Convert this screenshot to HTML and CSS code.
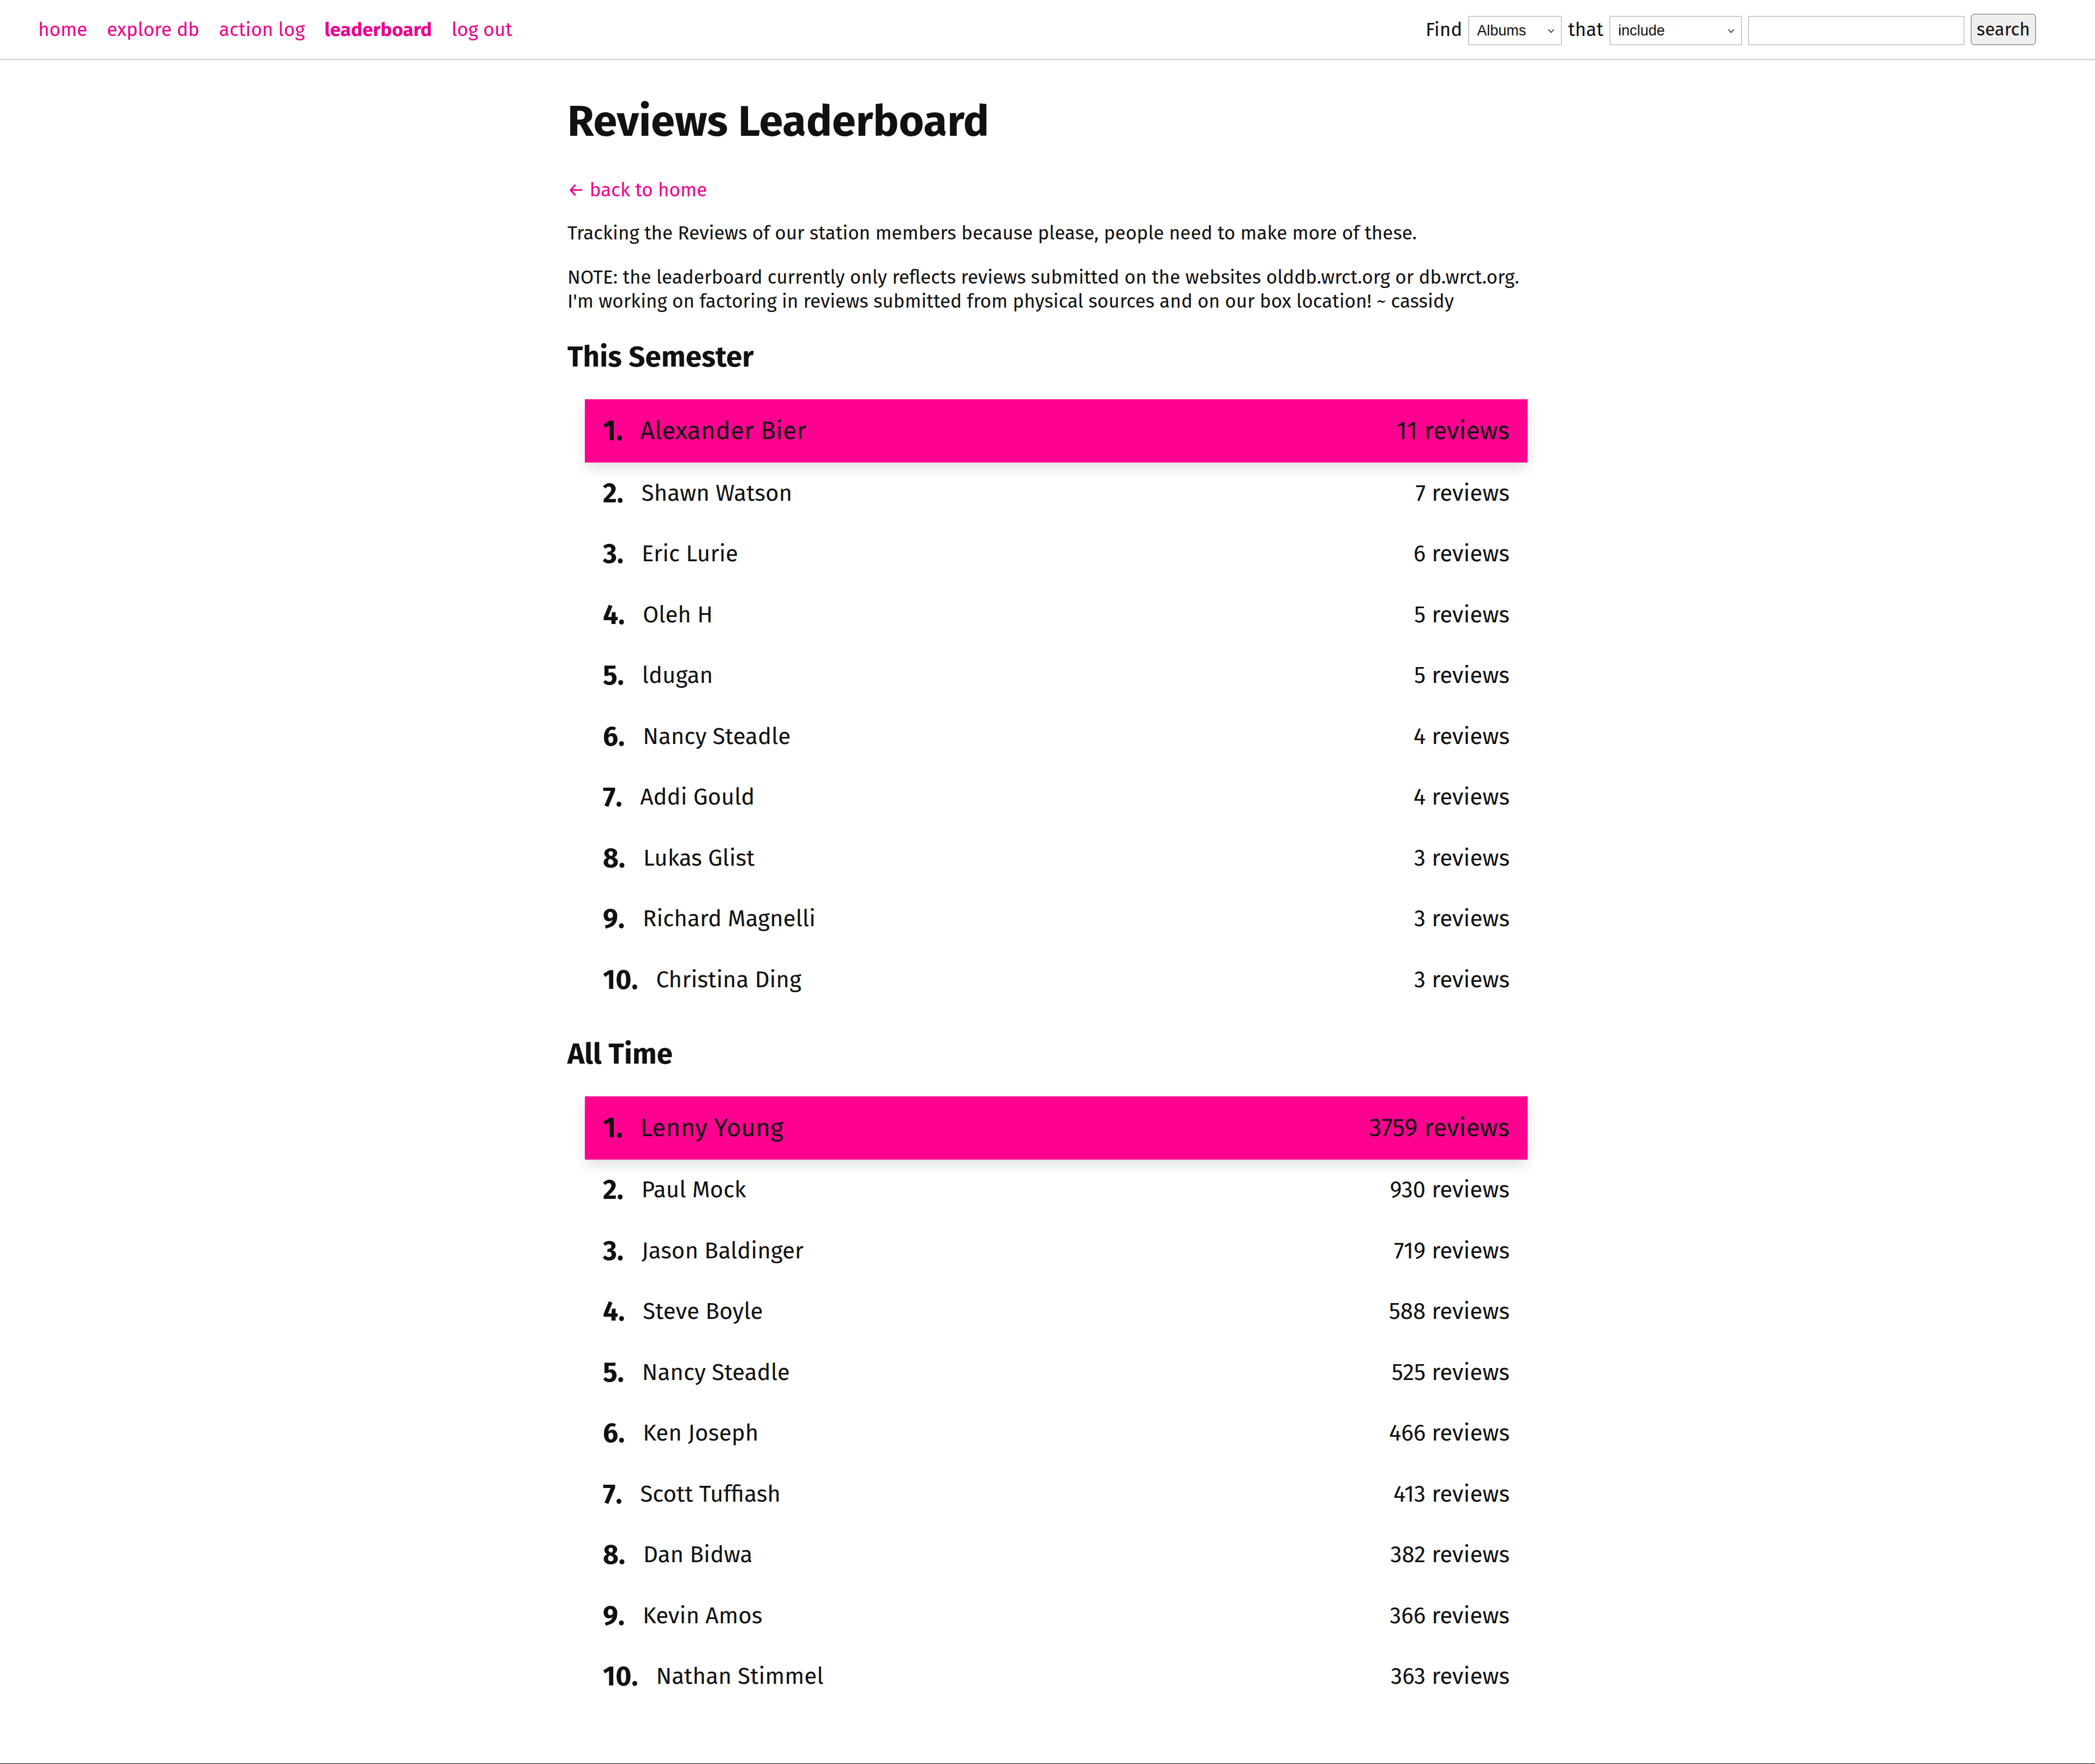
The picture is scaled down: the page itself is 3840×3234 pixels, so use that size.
FILE: index.html
```html
<!DOCTYPE html>
<html lang="en">
<head>
<meta charset="utf-8">
<title>Reviews Leaderboard</title>
<link rel="stylesheet" href="styles.css">
</head>
<body>
<nav class="topbar">
  <div class="nav-links">
    <a href="#">home</a>
    <a href="#">explore db</a>
    <a href="#">action log</a>
    <a href="#" class="current">leaderboard</a>
    <a href="#">log out</a>
  </div>
  <form class="search">
    <span class="label">Find</span>
    <span class="sel-wrap">
      <select class="sel sel-type"><option>Albums</option></select>
      <svg class="chev" width="12" height="8" viewBox="0 0 12 8"><path d="M1 1 L6 6.5 L11 1" fill="none" stroke="#333" stroke-width="1.8"/></svg>
    </span>
    <span class="label">that</span>
    <span class="sel-wrap">
      <select class="sel sel-mode"><option>include</option></select>
      <svg class="chev" width="12" height="8" viewBox="0 0 12 8"><path d="M1 1 L6 6.5 L11 1" fill="none" stroke="#333" stroke-width="1.8"/></svg>
    </span>
    <input class="query" type="text">
    <button class="btn" type="button">search</button>
  </form>
</nav>

<main class="page">
  <h1 class="title">Reviews Leaderboard</h1>
  <p class="back"><a href="#">← back to home</a></p>
  <p class="intro">Tracking the Reviews of our station members because please, people need to make more of these.</p>
  <p class="note">NOTE: the leaderboard currently only reflects reviews submitted on the websites olddb.wrct.org or db.wrct.org. I'm working on factoring in reviews submitted from physical sources and on our box location! ~ cassidy</p>

  <h2 class="section">This Semester</h2>
  <ol class="board">
    <li class="row top"><span class="rank">1.</span><span class="name">Alexander Bier</span><span class="count">11 reviews</span></li>
    <li class="row"><span class="rank">2.</span><span class="name">Shawn Watson</span><span class="count">7 reviews</span></li>
    <li class="row"><span class="rank">3.</span><span class="name">Eric Lurie</span><span class="count">6 reviews</span></li>
    <li class="row"><span class="rank">4.</span><span class="name">Oleh H</span><span class="count">5 reviews</span></li>
    <li class="row"><span class="rank">5.</span><span class="name">ldugan</span><span class="count">5 reviews</span></li>
    <li class="row"><span class="rank">6.</span><span class="name">Nancy Steadle</span><span class="count">4 reviews</span></li>
    <li class="row"><span class="rank">7.</span><span class="name">Addi Gould</span><span class="count">4 reviews</span></li>
    <li class="row"><span class="rank">8.</span><span class="name">Lukas Glist</span><span class="count">3 reviews</span></li>
    <li class="row"><span class="rank">9.</span><span class="name">Richard Magnelli</span><span class="count">3 reviews</span></li>
    <li class="row"><span class="rank">10.</span><span class="name">Christina Ding</span><span class="count">3 reviews</span></li>
  </ol>

  <h2 class="section">All Time</h2>
  <ol class="board">
    <li class="row top"><span class="rank">1.</span><span class="name">Lenny Young</span><span class="count">3759 reviews</span></li>
    <li class="row"><span class="rank">2.</span><span class="name">Paul Mock</span><span class="count">930 reviews</span></li>
    <li class="row"><span class="rank">3.</span><span class="name">Jason Baldinger</span><span class="count">719 reviews</span></li>
    <li class="row"><span class="rank">4.</span><span class="name">Steve Boyle</span><span class="count">588 reviews</span></li>
    <li class="row"><span class="rank">5.</span><span class="name">Nancy Steadle</span><span class="count">525 reviews</span></li>
    <li class="row"><span class="rank">6.</span><span class="name">Ken Joseph</span><span class="count">466 reviews</span></li>
    <li class="row"><span class="rank">7.</span><span class="name">Scott Tuffiash</span><span class="count">413 reviews</span></li>
    <li class="row"><span class="rank">8.</span><span class="name">Dan Bidwa</span><span class="count">382 reviews</span></li>
    <li class="row"><span class="rank">9.</span><span class="name">Kevin Amos</span><span class="count">366 reviews</span></li>
    <li class="row"><span class="rank">10.</span><span class="name">Nathan Stimmel</span><span class="count">363 reviews</span></li>
  </ol>
</main>
<footer class="footer"></footer>
</body>
</html>
```

FILE: styles.css
```css
* { box-sizing: border-box; }

html, body {
  margin: 0;
  padding: 0;
  background: #fff;
}

body {
  font-family: "Fira Sans", "Open Sans", "Noto Sans", sans-serif;
  color: #111;
  font-size: 35px;
  line-height: 44px;
}

a {
  color: #ec008c;
  text-decoration: none;
}

/* top navigation */
.topbar {
  height: 110px;
  border-bottom: 2px solid #cfcfcf;
  display: flex;
  align-items: center;
  justify-content: space-between;
  padding: 0 108px 0 70px;
}

.nav-links {
  display: flex;
  gap: 36px;
  font-size: 35px;
}

.nav-links .current {
  font-weight: 700;
}

.search {
  display: flex;
  align-items: center;
  gap: 11px;
  margin: 0;
}

.label {
  font-size: 35px;
  color: #111;
}

.sel-wrap {
  position: relative;
  display: block;
  margin-top: 4px;
}

.sel {
  display: block;
  height: 54px;
  font-family: "Liberation Sans", Arial, sans-serif;
  font-size: 27px;
  border: 2px solid #cdcdcd;
  border-radius: 0;
  background: #fff;
  color: #111;
  padding: 0 30px 0 14px;
  appearance: none;
  -webkit-appearance: none;
}

.chev {
  position: absolute;
  right: 14px;
  top: 24px;
  pointer-events: none;
}

.sel-type { width: 172px; }
.sel-mode { width: 243px; }

.query {
  width: 397px;
  height: 54px;
  border: 2px solid #cdcdcd;
  margin-top: 4px;
  font-size: 28px;
}

.btn {
  height: 58px;
  width: 120px;
  font-family: "Fira Sans", "Open Sans", "Noto Sans", sans-serif;
  font-size: 33px;
  color: #111;
  background: #efefef;
  border: 2px solid #a9a9a9;
  border-radius: 7px;
  padding: 0;
}

/* page */
.page {
  width: 1760px;
  margin: 0 auto;
  padding: 65px 0 104px;
}

.title {
  font-size: 79px;
  line-height: 96px;
  font-weight: 700;
  margin: 0;
}

.back {
  margin: 55px 0 0;
}

.intro {
  margin: 35px 0 0;
}

.note {
  margin: 37px 0 0;
}

.section {
  font-size: 53px;
  line-height: 62px;
  font-weight: 700;
  margin: 49px 0 47px;
}

.board {
  list-style: none;
  margin: 0 0 0 32px;
  padding: 0;
}

.row {
  display: flex;
  align-items: center;
  height: 111.5px;
  padding: 0 33px;
  font-size: 42px;
}

.row.top {
  height: 116px;
  font-size: 46px;
  background: #ff0090;
  box-shadow: 0 10px 22px rgba(0, 0, 0, 0.12);
  position: relative;
}

.rank {
  font-size: 50px;
  font-weight: 700;
  margin-right: 33px;
}

.row.top .rank {
  font-size: 52px;
  margin-right: 32px;
}

.name {
  flex: 1;
}

.count {
  text-align: right;
}

.footer {
  border-top: 4px solid #000;
  height: 40px;
}
```
